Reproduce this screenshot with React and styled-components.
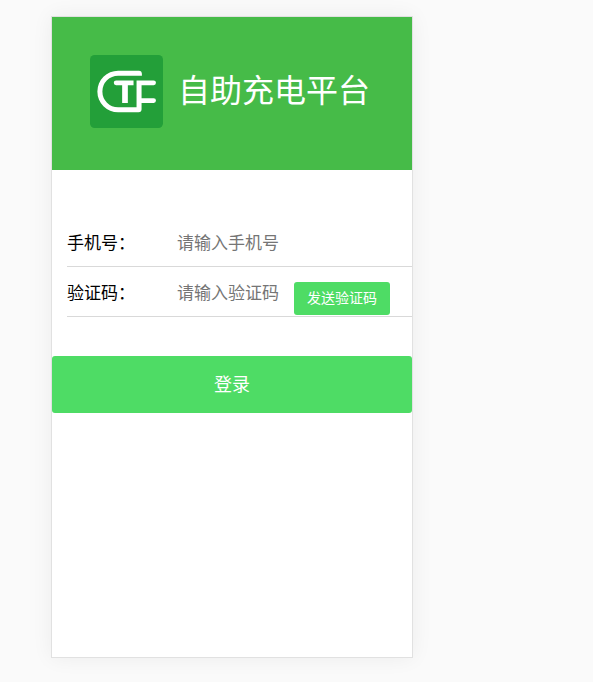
import React from "react";
import styled, { createGlobalStyle } from "styled-components";

const GlobalStyle = createGlobalStyle`
  * { box-sizing: border-box; }
  body {
    margin: 0;
    background: #fafafa;
    color: #000;
    font-family: "Noto Sans CJK SC", sans-serif;
    font-size: 17px;
  }
  button, input { font-family: inherit; }
`;

const Page = styled.main`
  padding: 16px 51px 24px;
`;

const Card = styled.section`
  max-width: 362px;
  min-height: 642px;
  background: #fff;
  border: 1px solid #e1e1e1;
  box-shadow: 0 0 20px rgba(0, 0, 0, 0.06);
`;

const Header = styled.header`
  display: flex;
  align-items: flex-start;
  gap: 15px;
  padding: 38px 38px 42px;
  background: #46bb48;
`;

const Logo = styled.svg`
  flex: none;
  width: 73px;
  height: 73px;
`;

const Title = styled.h1`
  margin: 0;
  color: #fff;
  font-size: 32px;
  font-weight: 400;
  line-height: 66px;
  white-space: nowrap;
`;

const Fields = styled.div`
  padding: 47px 0 39px 15px;
`;

const Row = styled.div`
  display: flex;
  align-items: center;
  height: 50px;
  border-bottom: 1px solid #d9d9d9;
`;

const Label = styled.label`
  flex: none;
  width: 110px;
  line-height: 24px;
`;

const Input = styled.input`
  flex: ${(p) => (p.$short ? "0 1 117px" : "1")};
  min-width: 0;
  height: 48px;
  padding: 0;
  border: 0;
  outline: 0;
  background: transparent;
  font-size: 17px;
  &::placeholder { color: #757575; opacity: 1; }
`;

const Button = styled.button`
  padding: 0 0 4px;
  border: 0;
  border-radius: 3px;
  background: #4edc65;
  color: #fff;
  cursor: pointer;
`;

const SendButton = styled(Button)`
  flex: none;
  align-self: flex-end;
  width: 96px;
  height: 33px;
  margin-bottom: 1px;
  font-size: 14px;
`;

const LoginButton = styled(Button)`
  display: block;
  width: 100%;
  height: 57px;
  font-size: 18px;
`;

export default function App() {
  return (
    <Page>
      <GlobalStyle />
      <Card>
        <Header>
          <Logo viewBox="31 31 218 218" aria-hidden="true">
            <rect x="31" y="31" width="218" height="218" rx="14" fill="#239f39" />
            <path
              fill="#fff"
              d="M115 78H177Q186 78 186 88V93H115A47 47 0 0 0 115 187H170V107H221A7 7 0 0 1 221 121H185V160H221A7 7 0 0 1 221 174H185V193Q185 202 176 202H115A62 62 0 0 1 115 78Z"
            />
            <path fill="#fff" d="M109 107H161V121H144V174H127V121H109A7 7 0 0 1 109 107Z" />
          </Logo>
          <Title>自助充电平台</Title>
        </Header>
        <form onSubmit={(e) => e.preventDefault()}>
          <Fields>
            <Row>
              <Label htmlFor="phone">手机号：</Label>
              <Input id="phone" type="tel" placeholder="请输入手机号" />
            </Row>
            <Row>
              <Label htmlFor="code">验证码：</Label>
              <Input id="code" type="text" placeholder="请输入验证码" $short />
              <SendButton type="button">发送验证码</SendButton>
            </Row>
          </Fields>
          <LoginButton type="submit">登录</LoginButton>
        </form>
      </Card>
    </Page>
  );
}
